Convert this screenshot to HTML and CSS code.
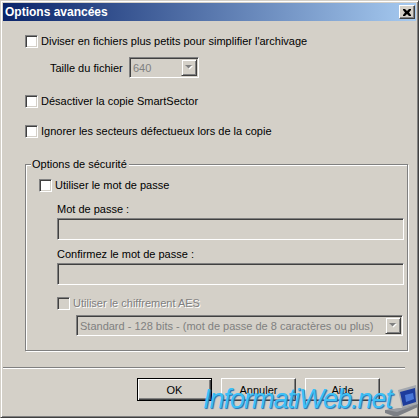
FILE: index.html
```html
<!DOCTYPE html>
<html lang="fr">

<head>
    <meta charset="UTF-8">
    <meta name="viewport" content="width=device-width, initial-scale=1.0">
    <title>Options avancées</title>
    <link rel="stylesheet" href="styles.css">
</head>

<body>

    <div class="window">
        <div class="titlebar">
            <span class="title">Options avancées</span>
            <span class="close">
                <svg width="8" height="7" viewBox="0 0 8 7">
                    <path d="M0 0h2l2 2 2-2h2v1L6 3.5 8 6v1H6L4 5 2 7H0V6l2-2.5L0 1z" fill="#000" />
                </svg>
            </span>
        </div>

        <div class="client">
            <div class="options">
                <div class="check-row">
                    <span class="box"></span>
                    <span>Diviser en fichiers plus petits pour simplifier l'archivage</span>
                </div>

                <div class="size-row">
                    <span class="size-label">Taille du fichier</span>
                    <div class="combo combo-size">
                        <span class="combo-text">640</span>
                        <span class="combo-btn">
                            <svg width="8" height="5" viewBox="0 0 8 5">
                                <path d="M1 1h7L4.5 4.5z" fill="#fff" />
                                <path d="M0 0h7L3.5 3.5z" fill="#808080" />
                            </svg>
                        </span>
                    </div>
                </div>

                <div class="check-row row-2">
                    <span class="box"></span>
                    <span>Désactiver la copie SmartSector</span>
                </div>

                <div class="check-row row-3">
                    <span class="box"></span>
                    <span>Ignorer les secteurs défectueux lors de la copie</span>
                </div>

                <!-- groupe sécurité -->
                <div class="group">
                    <span class="legend">Options de sécurité</span>

                    <div class="check-row">
                        <span class="box"></span>
                        <span>Utiliser le mot de passe</span>
                    </div>

                    <div class="pw-block">
                        <div class="field-label">Mot de passe :</div>
                        <div class="field"></div>
                        <div class="field-label label-2">Confirmez le mot de passe :</div>
                        <div class="field"></div>

                        <div class="check-row aes-row disabled">
                            <span class="box box-disabled"></span>
                            <span>Utiliser le chiffrement AES</span>
                        </div>

                        <div class="combo combo-aes">
                            <span class="combo-text">Standard - 128 bits - (mot de passe de 8 caractères ou plus)</span>
                            <span class="combo-btn">
                                <svg width="8" height="5" viewBox="0 0 8 5">
                                    <path d="M1 1h7L4.5 4.5z" fill="#fff" />
                                    <path d="M0 0h7L3.5 3.5z" fill="#808080" />
                                </svg>
                            </span>
                        </div>
                    </div>
                </div>
            </div>

            <div class="separator"></div>

            <div class="buttons">
                <button class="btn btn-default">OK</button>
                <button class="btn">Annuler</button>
                <button class="btn">Aide</button>
            </div>
        </div>

        <div class="watermark">InformatiWeb.net</div>
        <svg class="laptop" width="33" height="32" viewBox="0 0 33 32">
            <polygon points="13,5 31,0 33,19 17,23" fill="#a4a8ae" />
            <polygon points="15,7 30,3 31,17 18,21" fill="#1d3c9c" />
            <polygon points="20,10 28,8 29,14 21,17" fill="#4a78d8" />
            <polygon points="0,25 17,23 33,19 33,22 11,32 0,28" fill="#7d8086" />
            <polygon points="2,25 17,23 31,20 12,27" fill="#9a9da3" />
        </svg>
    </div>

</body>

</html>
```

FILE: styles.css
```css
html,
body {
    margin: 0;
    padding: 0;
}

body {
    font-family: "Liberation Sans", Arial, sans-serif;
    font-size: 11px;
    color: #000;
    background: #d4d0c8;
}

.window {
    position: relative;
    box-sizing: border-box;
    width: 419px;
    height: 418px;
    padding: 2px;
    background: #d4d0c8;
    border: 1px solid;
    border-color: #d4d0c8 #404040 #404040 #d4d0c8;
    box-shadow: inset 1px 1px #fff, inset -1px -1px #808080;
    overflow: hidden;
}

/* barre de titre */
.titlebar {
    display: flex;
    align-items: center;
    justify-content: space-between;
    height: 18px;
    padding: 0 2px;
    background: linear-gradient(to right, #0a246a, #a6caf0);
}

.title {
    color: #fff;
    font-weight: bold;
    font-size: 12px;
}

.close {
    display: flex;
    align-items: center;
    justify-content: center;
    box-sizing: border-box;
    width: 16px;
    height: 14px;
    margin-right: -1px;
    background: #d4d0c8;
    border: 1px solid;
    border-color: #fff #404040 #404040 #fff;
    box-shadow: inset -1px -1px #808080;
}

.options {
    padding: 14px 0 0 22px;
}

.check-row {
    display: flex;
    align-items: center;
    gap: 3px;
    height: 13px;
    line-height: 13px;
    white-space: nowrap;
}

.box {
    box-sizing: border-box;
    width: 13px;
    height: 13px;
    flex: none;
    background: #fff;
    border: 1px solid;
    border-color: #808080 #fff #fff #808080;
    box-shadow: inset 1px 1px #404040, inset -1px -1px #d4d0c8;
}

.box-disabled {
    background: #d4d0c8;
}

.disabled {
    color: #808080;
    text-shadow: 1px 1px #fff;
}

.size-row {
    display: flex;
    align-items: center;
    margin: 9px 0 0 25px;
}

.size-label {
    width: 79px;
}

.combo {
    display: flex;
    align-items: center;
    justify-content: space-between;
    box-sizing: border-box;
    height: 21px;
    padding: 0 0 0 1px;
    background: #d4d0c8;
    border: 1px solid;
    border-color: #808080 #fff #fff #808080;
    box-shadow: inset 1px 1px #404040, inset -1px -1px #d4d0c8;
    color: #808080;
}

.combo-text {
    padding-left: 2px;
    white-space: nowrap;
}

.combo-btn {
    display: flex;
    align-items: center;
    justify-content: center;
    box-sizing: border-box;
    width: 16px;
    height: 17px;
    margin-right: 1px;
    border: 1px solid;
    border-color: #d4d0c8 #404040 #404040 #d4d0c8;
    box-shadow: inset 1px 1px #fff, inset -1px -1px #808080;
}

.combo-size {
    width: 70px;
}

.row-2 {
    margin-top: 17px;
}

.row-3 {
    margin-top: 17px;
}

/* groupe sécurité */
.group {
    position: relative;
    box-sizing: border-box;
    width: 383px;
    height: 187px;
    margin-top: 26px;
    padding: 14px 0 0 13px;
    border: 1px solid #808080;
    box-shadow: inset 1px 1px #fff, 1px 1px #fff;
}

.legend {
    position: absolute;
    top: -7px;
    left: 5px;
    padding: 0 2px 0 1px;
    line-height: 13px;
    background: #d4d0c8;
}

.pw-block {
    padding-left: 18px;
}

.field-label {
    margin-top: 11px;
    line-height: 13px;
}

.label-2 {
    margin-top: 8px;
}

.field {
    box-sizing: border-box;
    width: 347px;
    height: 22px;
    margin-top: 2px;
    background: #d4d0c8;
    border: 1px solid;
    border-color: #808080 #fff #fff #808080;
    box-shadow: inset 1px 1px #404040, inset -1px -1px #d4d0c8;
}

.aes-row {
    margin-top: 12px;
}

.combo-aes {
    width: 327px;
    margin: 5px 0 0 19px;
}

.separator {
    width: 402px;
    height: 1px;
    margin-top: 16px;
    border-top: 1px solid #808080;
    border-bottom: 1px solid #fff;
    box-sizing: content-box;
    height: 0;
}

.buttons {
    display: flex;
    gap: 9px;
    margin: 9px 0 0 134px;
}

.btn {
    box-sizing: border-box;
    width: 75px;
    height: 23px;
    padding: 0;
    font: inherit;
    color: #000;
    background: #d4d0c8;
    border: 1px solid;
    border-color: #fff #404040 #404040 #fff;
    box-shadow: inset -1px -1px #808080;
}

.btn-default {
    border: 1px solid #000;
    box-shadow: inset 1px 1px #fff, inset -1px -1px #404040, inset -2px -2px #808080;
}

/* filigrane */
.watermark {
    position: absolute;
    left: 202px;
    top: 383px;
    font-size: 27px;
    font-style: italic;
    letter-spacing: -1px;
    color: #3cc0f6;
    text-shadow: 1px 1px 1px #1d6fb5;
}

.laptop {
    position: absolute;
    right: 0;
    bottom: 0;
}
```
